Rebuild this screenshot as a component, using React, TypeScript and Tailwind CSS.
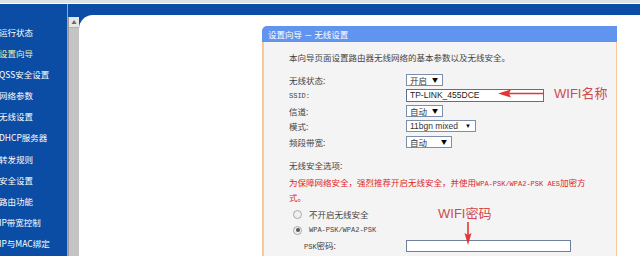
const menu = [
  '运行状态',
  '设置向导',
  'QSS安全设置',
  '网络参数',
  '无线设置',
  'DHCP服务器',
  '转发规则',
  '安全设置',
  '路由功能',
  'IP带宽控制',
  'IP与MAC绑定',
];

const cjk = { fontFamily: '"Noto Sans CJK SC", "Liberation Sans", sans-serif' };

const Select = ({ text, width }: { text: string; width: string }) => (
  <div
    className={`flex items-center justify-between h-[12px] border border-[#7c8eaa] bg-white pl-[3px] pr-[4px] text-[8.5px] leading-none text-[#333] ${width}`}
  >
    <span>{text}</span>
    <span className="text-[6px] text-black">▼</span>
  </div>
);

const Row = ({ label, children }: { label: React.ReactNode; children: React.ReactNode }) => (
  <div className="flex items-center h-[15.5px]">
    <div className="w-[117px] text-[8.5px] leading-none text-[#444]">{label}</div>
    {children}
  </div>
);

const Mono = ({ children }: { children: React.ReactNode }) => (
  <span className="text-[7px]" style={{ fontFamily: '"Liberation Mono", monospace' }}>
    {children}
  </span>
);

const Radio = ({ checked }: { checked?: boolean }) => (
  <span className="flex items-center justify-center w-[9px] h-[9px] rounded-full border border-[#a8a8a8] bg-[#f0f0f0]">
    {checked && <span className="w-[4px] h-[4px] rounded-full bg-[#555]" />}
  </span>
);

export default function App() {
  return (
    <div className="relative w-[640px] h-[256px] overflow-hidden bg-white" style={cjk}>
      {/* 顶部灰条 */}
      <div className="h-[4px] bg-[#dde0e4] border-b border-white" />

      <div className="flex h-[252px] bg-[#0b4ca4]">
        {/* 左侧菜单 */}
        <div className="w-[68px] shrink-0 pt-[21px] -ml-[1px]">
          {menu.map((m, i) => (
            <div
              key={m}
              className={`h-[21.1px] text-[8.5px] leading-[14px] whitespace-nowrap ${i === 1 ? 'text-[#eef2b4]' : 'text-white'}`}
            >
              {m}
            </div>
          ))}
        </div>

        {/* 滚动条 */}
        <div className="w-[1px] bg-[#8fa9d4]" />
        <div className="w-[11px] shrink-0 mt-[13px] bg-[#c4c4c4] border-l border-[#9a9a9a]">
          <div className="h-[11px] bg-[#e6e6e6] border-b border-[#b0b0b0] flex items-center justify-center text-[5px] text-[#666]">
            ▲
          </div>
        </div>

        {/* 主区域 */}
        <div className="flex-1 mt-[11px] bg-white rounded-tl-[14px] pl-[183px] pt-[11px]">
          <div className="w-[355px]">
            <div className="h-[16px] bg-[#6194ee] rounded-tl-[5px] pl-[6px] text-[8.5px] leading-[16px] text-white">
              设置向导 － 无线设置
            </div>
            <div className="h-[220px] bg-[#f4f4f5] border-l-2 border-r border-[#f9c99c] pl-[25px] pt-[9px]">
              <div className="text-[8.5px] leading-[12px] text-[#444]">
                本向导页面设置路由器无线网络的基本参数以及无线安全。
              </div>

              <div className="mt-[9px]">
                <Row label="无线状态:">
                  <Select text="开启" width="w-[37px]" />
                </Row>
                <Row label={<Mono>SSID:</Mono>}>
                  <div className="h-[13px] w-[138px] border border-[#5f6f94] bg-white pl-[3px] text-[8.5px] leading-[11px] text-[#222]" style={{ fontFamily: '"Liberation Sans", sans-serif' }}>
                    TP-LINK_455DCE
                  </div>
                </Row>
                <Row label="信道:">
                  <Select text="自动" width="w-[37px]" />
                </Row>
                <Row label="模式:">
                  <div style={{ fontFamily: '"Liberation Sans", sans-serif' }}>
                    <Select text="11bgn mixed" width="w-[70px]" />
                  </div>
                </Row>
                <Row label="频段带宽:">
                  <Select text="自动" width="w-[46px]" />
                </Row>
              </div>

              <div className="mt-[9.5px] text-[8.5px] leading-[12px] text-[#444]">无线安全选项:</div>
              <div className="mt-[5px] w-[300px] text-[8.5px] leading-[13px] text-[#e02424]">
                为保障网络安全，强烈推荐开启无线安全，并使用<Mono>WPA-PSK/WPA2-PSK AES</Mono>加密方
                <br />
                式。
              </div>

              <div className="mt-[2px] flex items-center h-[16px] pl-[4px] gap-[7px] text-[8.5px] text-[#444]">
                <Radio />
                <span>不开启无线安全</span>
              </div>
              <div className="flex items-center h-[16px] pl-[4px] gap-[7px] text-[8.5px] text-[#444]">
                <Radio checked />
                <Mono>WPA-PSK/WPA2-PSK</Mono>
              </div>
              <div className="flex items-center h-[16px]">
                <div className="w-[117px] pl-[15px] text-[8.5px] text-[#444]">
                  <Mono>PSK</Mono>密码:
                </div>
                <div className="h-[12px] w-[165px] border border-[#6f7f9e] bg-white" />
              </div>
            </div>
          </div>
        </div>
      </div>

      {/* 标注 */}
      <svg className="absolute left-0 top-0 pointer-events-none" width="640" height="256">
        <line x1="544" y1="93.5" x2="508" y2="93.5" stroke="#e23636" strokeWidth="1.6" />
        <polygon points="498,93.5 511,89.5 509,93.5 511,97.5" fill="#e23636" />
        <line x1="468" y1="222" x2="468" y2="236" stroke="#e23636" strokeWidth="1.6" />
        <polygon points="468,245 464.5,233 468,235 471.5,233" fill="#e23636" />
      </svg>
      <span
        className="absolute left-[554px] top-[86px] text-[13px] leading-[16px] text-[#cf4a4a]"
        style={{ fontFamily: '"Liberation Sans", "Noto Sans CJK SC", sans-serif' }}
      >
        WIFI名称
      </span>
      <span
        className="absolute left-[438px] top-[206px] text-[13px] leading-[16px] text-[#cf4a4a]"
        style={{ fontFamily: '"Liberation Sans", "Noto Sans CJK SC", sans-serif' }}
      >
        WIFI密码
      </span>
    </div>
  );
}
